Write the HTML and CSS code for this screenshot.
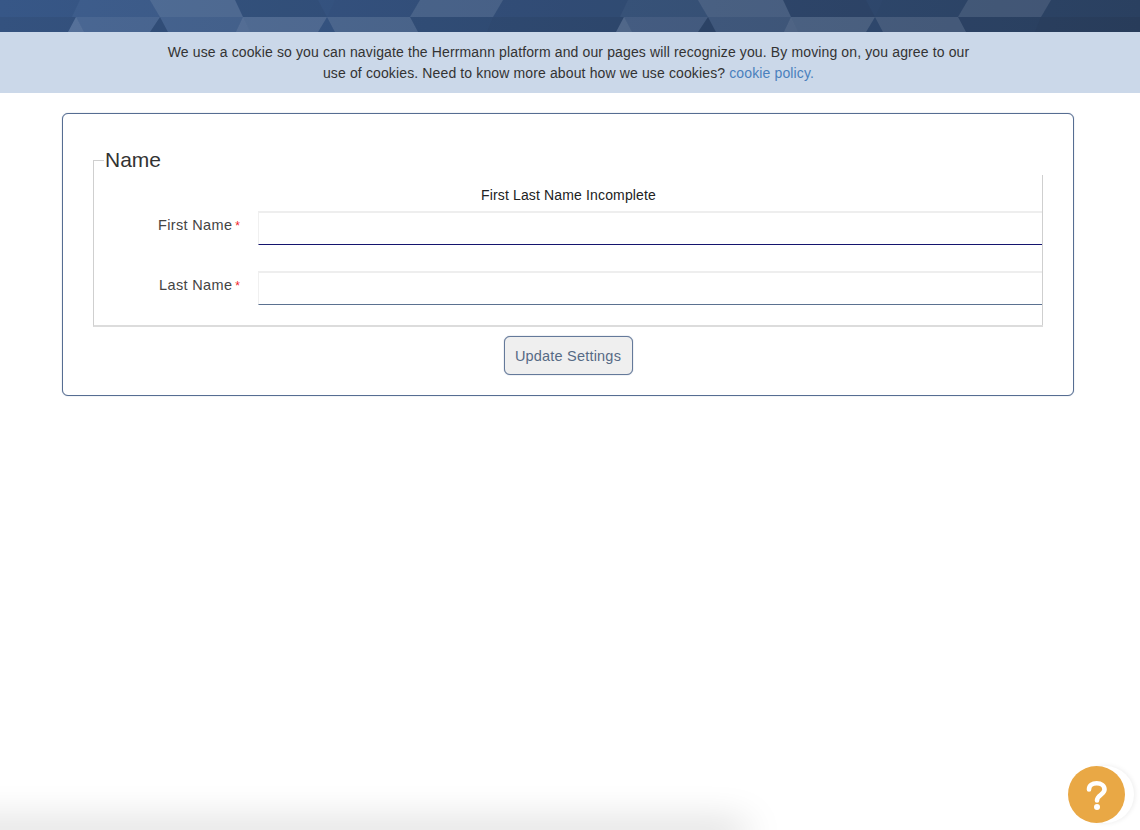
FILE: index.html
```html
<!DOCTYPE html>
<html lang="en">
<head>
<meta charset="utf-8">
<title>Name Settings</title>
<link rel="stylesheet" href="styles.css">
</head>
<body>
<header class="banner">
  <svg class="banner-art" width="100%" height="32" aria-hidden="true">
    <defs>
      <linearGradient id="bannerBase" x1="0" x2="1" y1="0" y2="0">
        <stop offset="0" stop-color="#38598a"/>
        <stop offset="1" stop-color="#2b4162"/>
      </linearGradient>
      <pattern id="facets" patternUnits="userSpaceOnUse" x="60" y="0" width="548" height="32">
        <g transform="translate(-60 0)">
          <polygon points="60,0 80,0 72,17 60,17" fill="#000" fill-opacity=".02"/>
          <polygon points="80,0 150,0 160,17 72,17" fill="#fff" fill-opacity=".03"/>
          <polygon points="150,0 235,0 243,17 160,17" fill="#fff" fill-opacity=".12"/>
          <polygon points="235,0 318,0 327,17 243,17" fill="#000" fill-opacity=".05"/>
          <polygon points="335,0 420,0 410,17 327,17" fill="#000" fill-opacity=".02"/>
          <polygon points="420,0 503,0 493,17 410,17" fill="#fff" fill-opacity=".1"/>
          <polygon points="503,0 608,0 608,17 493,17" fill="#000" fill-opacity=".02"/>
          <polygon points="60,17 76,17 68,32 60,32" fill="#000" fill-opacity=".08"/>
          <polygon points="76,17 68,32 84,32" fill="#fff" fill-opacity=".15"/>
          <polygon points="76,17 160,17 150,32 84,32" fill="#fff" fill-opacity=".09"/>
          <polygon points="160,17 150,32 168,32" fill="#000" fill-opacity=".1"/>
          <polygon points="160,17 243,17 236,32 168,32" fill="#fff" fill-opacity=".07"/>
          <polygon points="243,17 236,32 250,32" fill="#fff" fill-opacity=".15"/>
          <polygon points="243,17 327,17 318,32 250,32" fill="#fff" fill-opacity=".13"/>
          <polygon points="327,17 410,17 418,32 335,32" fill="#fff" fill-opacity=".11"/>
          <polygon points="410,17 493,17 487,32 418,32" fill="#000" fill-opacity=".05"/>
          <polygon points="493,17 608,17 608,32 487,32" fill="#000" fill-opacity=".08"/>
        </g>
      </pattern>
    </defs>
    <rect width="100%" height="32" fill="url(#bannerBase)"/>
    <rect width="100%" height="32" fill="url(#facets)"/>
  </svg>
</header>

<section class="cookie-bar">
  <p class="cookie-text">We use a cookie so you can navigate the Herrmann platform and our pages will recognize you. By moving on, you agree to our<br>use of cookies. Need to know more about how we use cookies? <a class="cookie-link" href="#">cookie policy.</a></p>
</section>

<main class="page">
  <form class="card">
    <div class="group">
      <div class="legend">Name</div>
      <p class="message">First Last Name Incomplete</p>
      <div class="row">
        <label class="field-label" for="first">First Name<span class="req">*</span></label>
        <input class="field field-focus" id="first" type="text">
      </div>
      <div class="row">
        <label class="field-label" for="last">Last Name<span class="req">*</span></label>
        <input class="field" id="last" type="text">
      </div>
    </div>
    <div class="actions">
      <button class="update" type="button">Update Settings</button>
    </div>
  </form>
</main>

<div class="page-shadow"></div>

<button class="help" type="button" aria-label="Help">
  <svg width="57" height="57" viewBox="0 0 57 57" aria-hidden="true">
    <path d="M21 23.5C21 19.5 24.3 17.3 28.7 17.3C33.3 17.3 36.5 19.8 36.5 23.5C36.5 28.5 29 29 29 34.5" fill="none" stroke="#fff" stroke-width="4.6" stroke-linecap="round"/>
    <circle cx="29" cy="41" r="3" fill="#fff"/>
  </svg>
</button>
</body>
</html>
```

FILE: styles.css
```css
* {
  box-sizing: border-box;
}

html,
body {
  height: 100%;
}

body {
  margin: 0;
  background: #fff;
  color: #333;
  font-family: "Liberation Sans", Arial, sans-serif;
  overflow: hidden;
}

.banner {
  height: 32px;
}

.banner-art {
  display: block;
}

.cookie-bar {
  height: 61px;
  padding: 10px 3px 0 0;
  background: #cbd8e9;
  text-align: center;
}

.cookie-text {
  margin: 0;
  font-size: 14px;
  line-height: 21px;
  letter-spacing: 0.13px;
  color: #333;
}

.cookie-link {
  color: #4a80bd;
  text-decoration: none;
}

.page {
  padding: 20px 66px 0 62px;
}

.card {
  display: block;
  padding: 46px 30px 20px;
  background: #fff;
  border: 1px solid #566d92;
  border-radius: 6px;
  box-shadow: 0 0 1px #8496b0;
}

.group {
  display: flow-root;
  position: relative;
  padding-bottom: 20px;
  border-left: 1px solid #cfcfcf;
  border-bottom: 2px solid #dcdcdc;
}

.group::before {
  content: "";
  position: absolute;
  left: 0;
  top: 0;
  width: 10px;
  height: 1px;
  background: #cfcfcf;
}

.group::after {
  content: "";
  position: absolute;
  right: 0;
  top: 15px;
  bottom: 0;
  width: 1px;
  background: #cfcfcf;
}

.legend {
  height: 24px;
  margin-top: -12px;
  padding-left: 11px;
  font-size: 21px;
  line-height: 24px;
  color: #333;
}

.message {
  margin: 13px 0 6px;
  font-size: 14px;
  line-height: 20px;
  letter-spacing: 0.15px;
  text-align: center;
  color: #222;
}

.row {
  display: flex;
  align-items: flex-start;
  margin-right: 1px;
}

.row + .row {
  margin-top: 26px;
}

.field-label {
  flex: 0 0 164px;
  padding-right: 18px;
  font-size: 14.5px;
  line-height: 28px;
  letter-spacing: 0.35px;
  text-align: right;
  color: #444;
}

.req {
  margin-left: 3px;
  color: #f0262c;
  font-size: 12px;
  letter-spacing: 0;
}

.field {
  flex: 1;
  display: block;
  height: 34px;
  padding: 0 8px;
  background: #fff;
  border: 0;
  border-top: 2px solid #eeeeee;
  border-left: 1px solid #f0f0f0;
  border-bottom: 1px solid #5b7190;
  border-radius: 0;
  outline: 0;
}

.field-focus {
  border-bottom-color: #14146e;
}

.actions {
  display: flex;
  justify-content: center;
  padding-top: 9px;
}

.update {
  width: 129px;
  height: 39px;
  padding: 0;
  background: #efefef;
  border: 1px solid #64799a;
  border-radius: 6px;
  box-shadow: 0 0 1px #64799a;
  color: #566a85;
  font-family: inherit;
  font-size: 14.5px;
  letter-spacing: 0.2px;
}

.page-shadow {
  position: fixed;
  left: -60px;
  bottom: -8px;
  width: 800px;
  height: 8px;
  box-shadow: 0 0 38px 5px rgba(0, 0, 0, 0.22);
}

.help {
  position: fixed;
  left: 1068px;
  top: 766px;
  width: 57px;
  height: 57px;
  padding: 0;
  background: #e9a845;
  border: 0;
  border-radius: 50%;
  box-shadow: 9px 0 0 0 #fff, 10px 0 5px 0 rgba(0, 0, 0, 0.08);
}

.help svg {
  display: block;
}
```
